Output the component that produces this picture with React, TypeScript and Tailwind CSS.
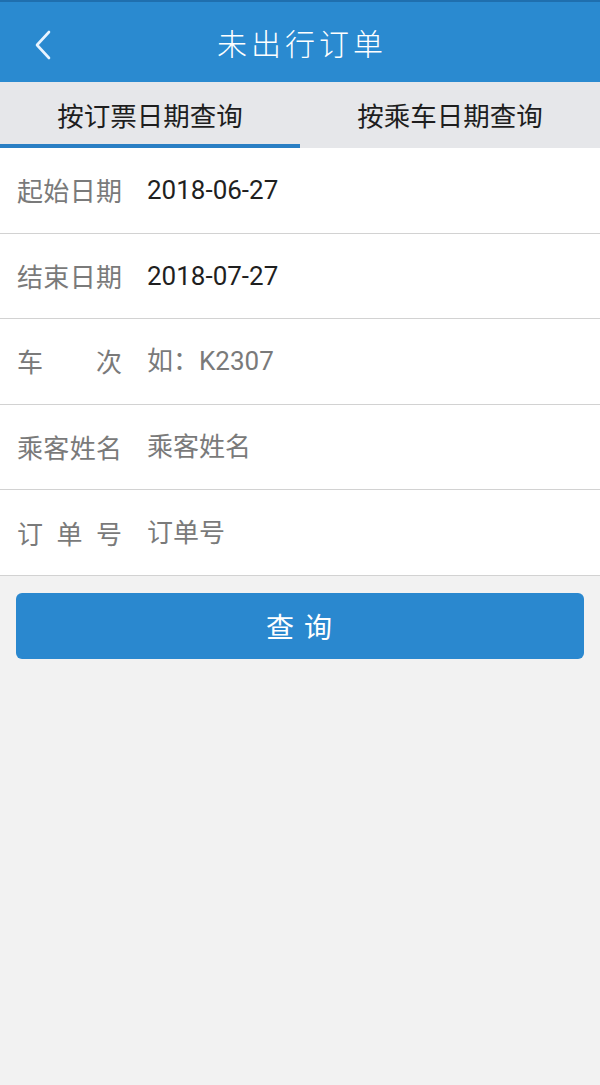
import React, { useState } from 'react';

const rows = [
  { label: '起始日期', value: '2018-06-27', filled: true },
  { label: '结束日期', value: '2018-07-27', filled: true },
  { label: '车次', value: '如：K2307', filled: false },
  { label: '乘客姓名', value: '乘客姓名', filled: false },
  { label: '订单号', value: '订单号', filled: false },
];

export default function App() {
  const [tab, setTab] = useState(0);
  const tabs = ['按订票日期查询', '按乘车日期查询'];

  return (
    <div className="min-h-[1085px] bg-[#f2f2f2] font-['Roboto','Noto_Sans_CJK_SC',sans-serif]">
      {/* header */}
      <div className="relative flex h-[82px] items-center justify-center border-t-2 border-[#1f6fae] bg-[#2a8ad0]">
        <button className="absolute left-[30px] top-[24px] p-1" aria-label="返回">
          <svg width="18" height="30" viewBox="0 0 18 30" fill="none">
            <path d="M15 2 L3 15 L15 28" stroke="#e8f4ff" strokeWidth="2.6" strokeLinecap="round" strokeLinejoin="round" />
          </svg>
        </button>
        <h1 className="pl-1 text-[30px] tracking-[4px] text-white font-['Noto_Sans_CJK_SC',sans-serif] font-light">未出行订单</h1>
      </div>

      {/* tabs */}
      <div className="flex h-[66px] bg-[#e6e7ea]">
        {tabs.map((t, i) => (
          <button
            key={t}
            onClick={() => setTab(i)}
            className={`flex flex-1 items-center justify-center border-b-4 pt-1 text-[26.5px] text-[#1e1e1e] font-['Noto_Sans_CJK_SC',sans-serif] ${tab === i ? 'border-[#2a7fc4]' : 'border-transparent'}`}
          >
            {t}
          </button>
        ))}
      </div>

      {/* form */}
      <div className="bg-white">
        {rows.map(r => (
          <div key={r.label} className="flex h-[85.6px] items-center border-b-[1.5px] border-[#d2d2d2] pl-[17px]">
            <span className="flex w-[105px] justify-between text-[26px] leading-none text-[#7a7a7a] font-['Noto_Sans_CJK_SC',sans-serif]">
              {r.label.split('').map((c, i) => (
                <span key={i}>{c}</span>
              ))}
            </span>
            <span className={`ml-[25px] text-[26px] leading-none ${r.filled ? 'text-[#1f1f1f]' : 'text-[#7a7a7a]'}`}>{r.value}</span>
          </div>
        ))}
      </div>

      {/* submit */}
      <div className="px-4 pt-[17px]">
        <button className="flex h-[66px] w-full items-center justify-center rounded-[6px] bg-[#2a88cf] pl-2 text-[28px] tracking-[10px] text-white font-['Noto_Sans_CJK_SC',sans-serif]">
          查询
        </button>
      </div>
    </div>
  );
}
